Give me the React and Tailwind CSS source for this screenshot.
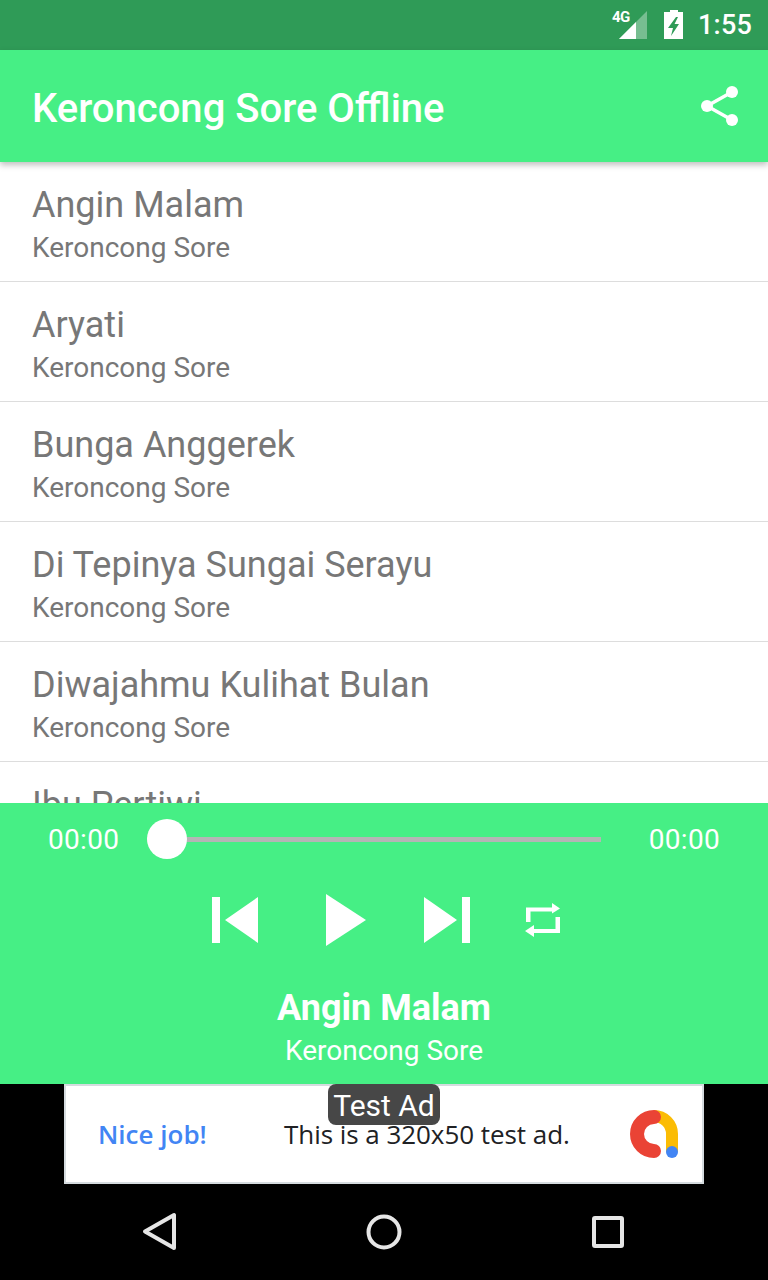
const songs = [
  "Angin Malam",
  "Aryati",
  "Bunga Anggerek",
  "Di Tepinya Sungai Serayu",
  "Diwajahmu Kulihat Bulan",
  "Ibu Pertiwi",
];

const StatusBar = () => (
  <div className="flex h-[50px] items-center justify-end bg-[#2f9b57] pr-4 text-white">
    <div className="relative mr-[16px] h-[40px] w-[36px]">
      <span className="absolute left-0 top-[4px] text-[15px] font-bold leading-[16px] tracking-[-0.6px]">4G</span>
      <svg className="absolute left-[7px] top-[6px]" width="29" height="29" viewBox="0 0 29 29">
        <path d="M0 28 L28 0 V28 Z" fill="#fff" fillOpacity="0.35" />
        <path d="M0 28 L17 11 V28 Z" fill="#fff" />
      </svg>
    </div>
    <svg className="mr-[14px]" width="20" height="30" viewBox="0 0 20 30">
      <path fillRule="evenodd" d="M6 0 H14 V2 H19 V29 H0 V2 H6 Z M12 7 L4 18 H9 L7 26 L15 14 H10.5 L14 7 Z" fill="#fff" />
    </svg>
    <span className="text-[27px] font-medium leading-none tracking-[0.2px]">1:55</span>
  </div>
);

const AppBar = () => (
  <div className="relative z-10 flex h-[112px] items-center justify-between bg-[#46ef85] pl-8 pr-[28px] shadow-[0_3px_6px_rgba(0,0,0,0.25)]">
    <h1 className="mt-[5px] text-[40px] font-medium leading-none text-white">Keroncong Sore Offline</h1>
    <svg width="40" height="42" viewBox="0 0 40 42" fill="#fff">
      <circle cx="32" cy="7" r="6" />
      <circle cx="7" cy="21" r="6" />
      <circle cx="32" cy="35" r="6" />
      <path d="M7 21 L32 7 M7 21 L32 35" stroke="#fff" strokeWidth="3.5" />
    </svg>
  </div>
);

const SongRow = ({ title }) => (
  <div className="h-[120px] shrink-0 border-b border-[#dddddd] pl-8 pt-[20px]">
    <p className="text-[36px] leading-[46px] text-[#777777]">{title}</p>
    <p className="mt-[1px] text-[28px] leading-[38px] text-[#777777]">Keroncong Sore</p>
  </div>
);

const Player = () => (
  <div className="h-[281px] bg-[#46ef85] text-white">
    <div className="flex h-[72px] items-center pl-[48px] pr-[48px]">
      <span className="mt-[1px] w-[99px] text-[28px] leading-none tracking-[0.3px]">00:00</span>
      <div className="relative h-[5px] w-[454px] bg-[#b5b5b5]">
        <div className="absolute left-0 top-[-18px] h-[40px] w-[40px] rounded-full bg-white" />
      </div>
      <span className="ml-auto mt-[1px] text-[28px] leading-none tracking-[0.3px]">00:00</span>
    </div>
    <div className="relative h-[90px]">
      <svg className="absolute left-[212px] top-[22px]" width="46" height="46" viewBox="0 0 46 46" fill="#fff">
        <path d="M0 0 H8 V46 H0 Z M46 0 V46 L13 23 Z" />
      </svg>
      <svg className="absolute left-[325px] top-[19px]" width="42" height="52" viewBox="0 0 42 52" fill="#fff">
        <path d="M1 0 L41 26 L1 52 Z" />
      </svg>
      <svg className="absolute left-[424px] top-[22px]" width="46" height="46" viewBox="0 0 46 46" fill="#fff">
        <path d="M38 0 H46 V46 H38 Z M0 0 L33 23 L0 46 Z" />
      </svg>
      <svg className="absolute left-[525px] top-[28px]" width="36" height="35" viewBox="0 0 36 35" fill="#fff">
        <path d="M1 19 V4.5 H27 V0 L35 5.5 L27 10.5 V8.5 H5.5 V19 Z" />
        <path d="M35 14 V30 H9 V34 L0 28 L9 22 V26 H30.5 V14 Z" />
      </svg>
    </div>
    <div className="pt-[22px] text-center">
      <p className="text-[36px] font-bold leading-[42px]">Angin Malam</p>
      <p className="mt-[1px] text-[28px] leading-[42px]">Keroncong Sore</p>
    </div>
  </div>
);

const AdBanner = () => (
  <div className="flex h-[100px] justify-center bg-black">
    <div className="relative flex w-[640px] items-center border-2 border-[#d5dbdf] bg-white pl-[32px] pr-[24px] font-['Open_Sans',Roboto,sans-serif]">
      <span className="mt-[1px] w-[186px] text-[26px] font-semibold text-[#4285f4]">Nice job!</span>
      <span className="mt-[1px] text-[26px] tracking-[-0.05px] text-[#202124]">This is a 320x50 test ad.</span>
      <div className="absolute left-[262px] top-[-2px] flex h-[41px] w-[112px] items-center justify-center rounded-[8px] bg-[#474747] pt-[2px] font-['Roboto',sans-serif] text-[30px] leading-none text-white">
        Test Ad
      </div>
      <svg className="ml-auto" width="48" height="48" viewBox="0 0 48 48" fill="none">
        <path d="M24 6 A18 18 0 0 1 42 24 V42" stroke="#fbbc04" strokeWidth="12" />
        <path d="M24 7 A17 17 0 0 0 24 41" stroke="#ea4335" strokeWidth="14" strokeLinecap="round" />
        <circle cx="42" cy="42" r="6" fill="#4285f4" />
      </svg>
    </div>
  </div>
);

const NavBar = () => (
  <div className="flex h-[96px] items-start bg-black">
    <div className="relative h-full w-full">
      <svg className="absolute left-[142px] top-[28px]" width="36" height="40" viewBox="0 0 36 40" fill="none" stroke="#e6e6e6" strokeWidth="4" strokeLinejoin="round">
        <path d="M32 3 V36 L3 19.5 Z" />
      </svg>
      <svg className="absolute left-[366px] top-[30px]" width="36" height="36" viewBox="0 0 36 36" fill="none" stroke="#e6e6e6" strokeWidth="4">
        <circle cx="18" cy="18" r="15.5" />
      </svg>
      <svg className="absolute left-[591px] top-[31px]" width="34" height="34" viewBox="0 0 34 34" fill="none" stroke="#e6e6e6" strokeWidth="4" strokeLinejoin="round">
        <rect x="3" y="3" width="28" height="28" rx="1" />
      </svg>
    </div>
  </div>
);

export default function App() {
  return (
    <div className="flex h-[1280px] w-[768px] flex-col overflow-hidden bg-white font-['Roboto',sans-serif]">
      <StatusBar />
      <AppBar />
      <div className="flex min-h-0 flex-1 flex-col overflow-hidden">
        {songs.map((song) => (
          <SongRow key={song} title={song} />
        ))}
      </div>
      <Player />
      <AdBanner />
      <NavBar />
    </div>
  );
}
